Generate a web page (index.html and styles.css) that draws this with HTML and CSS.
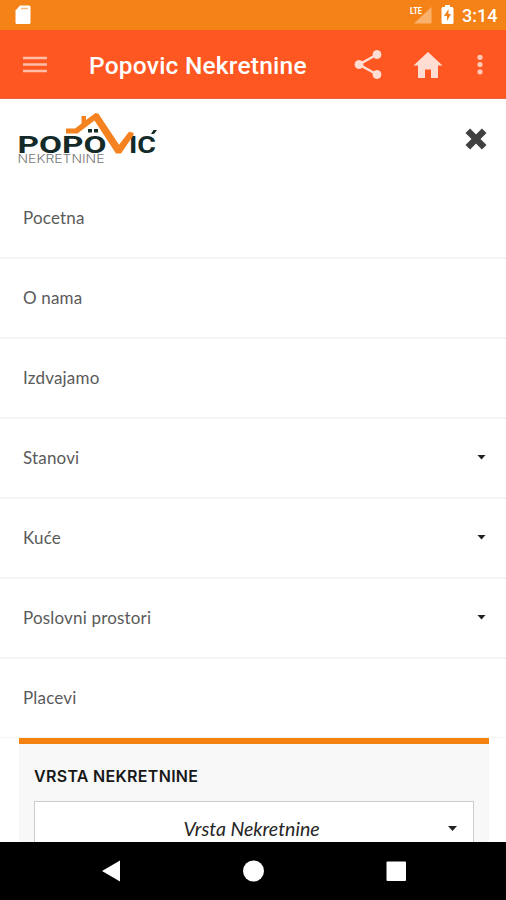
FILE: index.html
```html
<!DOCTYPE html>
<html lang="sr-Latn">
<head>
<meta charset="utf-8">
<title>Popovic Nekretnine</title>
<link rel="stylesheet" href="styles.css">
</head>
<body>
<div class="screen">
  <header class="status">
    <svg class="sd" width="16" height="20" viewBox="0 0 16 20"><path fill="#fff" d="M5 .5h9q1.500 0 1.500 1.500v15.500q0 1.500-1.500 1.500H2Q.5 19 .5 17.500V5.500Z"/><path stroke="#f9b982" stroke-width="1.500" d="M6 3.500h7"/></svg>
    <svg width="24" height="20" viewBox="0 0 24 20"><path fill="#fab16c" d="M23.500 2v16.500H6Z"/><text class="lte" x="2" y="9" textLength="12" lengthAdjust="spacingAndGlyphs">LTE</text></svg>
    <svg class="battery" width="13" height="20" viewBox="0 0 13 20"><path fill="#fff" d="M4 0h5v2h2q1.500 0 1.500 1.500v14q0 1.500-1.500 1.500H2Q.5 19 .5 17.500v-14Q.5 2 2 2h2Z"/><path fill="#f58220" d="M7.500 4 3 11h3v5l4-7H7.500Z"/></svg>
    <span class="clock">3:14</span>
  </header>
  <div class="toolbar">
    <svg class="burger" width="24" height="20" viewBox="0 0 24 20"><path stroke="#ffbea7" stroke-width="2.500" d="M0 3h24M0 9.500h24M0 16h24"/></svg>
    <h1>Popovic Nekretnine</h1>
    <svg class="share" width="28" height="32" viewBox="0 0 28 32"><g fill="#ffddd3" stroke="#ffddd3"><path fill="none" stroke-width="2.500" d="M23 5.500 5 15.500l18 10"/><circle cx="23" cy="5.500" r="4"/><circle cx="5" cy="15.500" r="4"/><circle cx="23" cy="25.500" r="4"/></g></svg>
    <svg class="home" width="30" height="28" viewBox="0 0 30 28"><path fill="#ffddd3" d="M15 1 .5 14.500H5V27h7v-8.500h6V27h7V14.500h4.500Z"/></svg>
    <svg class="more" width="6" height="20" viewBox="0 0 6 20"><g fill="#ffc9b7"><circle cx="3" cy="2.300" r="2.600"/><circle cx="3" cy="9.500" r="2.600"/><circle cx="3" cy="16.800" r="2.600"/></g></svg>
  </div>
  <main>
    <div class="brand">
      <svg width="142" height="54" viewBox="16 112 142 54">
        <text class="logo" x="17.500" y="153" textLength="89" lengthAdjust="spacingAndGlyphs">POPO</text>
        <text class="logo" x="129" y="153" textLength="27" lengthAdjust="spacingAndGlyphs">IC</text>
        <path fill="#132a28" d="M88 129h4v3.500h-4ZM94 129h4v3.500h-4ZM151 134l2.500-4h3.500l-3 4Z"/>
        <path fill="#f58220" d="M66 128.500h9l6.500-5v-7.500H86v4l9.500-7 3 .8 20.500 31 10-13 4.500 1v2.500L121 153.500h-5L94.500 120.500l-17 13H66Z"/>
        <text class="tagline" x="17.500" y="163" textLength="87" lengthAdjust="spacingAndGlyphs">NEKRETNINE</text>
      </svg>
      <svg class="close" width="22" height="22" viewBox="0 0 22 22"><path stroke="#404040" stroke-width="6.500" d="m2.800 2.800 16.400 16.400M19.200 2.800 2.800 19.200"/></svg>
    </div>
    <nav>
      <a><span>Pocetna</span></a>
      <a><span>O nama</span></a>
      <a><span>Izdvajamo</span></a>
      <a><span>Stanovi</span><i class="caret"></i></a>
      <a><span>Kuće</span><i class="caret"></i></a>
      <a><span>Poslovni prostori</span><i class="caret"></i></a>
      <a><span>Placevi</span></a>
    </nav>
    <section class="filter">
      <h2>VRSTA NEKRETNINE</h2>
      <div class="select"><span>Vrsta Nekretnine</span><i class="caret"></i></div>
    </section>
  </main>
  <footer>
    <svg width="506" height="58" viewBox="0 0 506 58"><g fill="#fff"><path d="M102 29 120 18.500v21Z"/><circle cx="253.500" cy="29" r="10.500"/><rect x="386.500" y="19.500" width="19.500" height="19.500" rx="1"/></g></svg>
  </footer>
</div>
</body>
</html>
```
FILE: styles.css
```css
* { box-sizing: border-box; }
body { margin: 0; background: #fff; }
svg { display: block; flex: none; }
.screen { width: 506px; height: 900px; display: flex; flex-direction: column; overflow: hidden; }
.status { height: 30px; flex: none; background: #f58217; display: flex; align-items: center; padding: 0 9px 0 15px; color: #fff; font-family: Roboto, sans-serif; }
.sd { margin-right: auto; }
.lte { font: 700 9px Roboto, sans-serif; fill: #fff; }
.battery { margin-left: 9px; }
.clock { margin-left: 8px; width: 35px; font-size: 18px; font-weight: 500; line-height: 30px; padding-top: 2px; white-space: nowrap; }
.toolbar { height: 69px; flex: none; background: #ff5722; border-bottom: 1px solid #e9663f; display: flex; align-items: center; padding: 1px 23px 0; }
.toolbar h1 { margin: 2px auto 0 42px; color: #fff; font: 500 24.500px/32px Roboto, sans-serif; letter-spacing: .22px; white-space: nowrap; }
.share { margin-right: 31px; }
.home { margin-right: 34px; }
main { flex: 1; min-height: 0; overflow: hidden; font-family: Lato, sans-serif; }
.brand { height: 80px; display: flex; justify-content: space-between; align-items: flex-start; padding: 13px 19px 0 16px; }
.logo { font: 700 23.300px Roboto, sans-serif; fill: #132a28; }
.tagline { font: 300 11px Inter, sans-serif; fill: #777; }
.close { margin-top: 16px; }
nav a { height: 80px; display: flex; align-items: center; justify-content: space-between; padding: 0 20px 2px 23px; border-bottom: 2px solid #f5f5f5; color: #5a5a5a; font-size: 17px; letter-spacing: .18px; }
nav a:last-child { height: 79px; border-bottom-width: 1px; }
.caret { width: 9px; height: 5px; background: #222; clip-path: polygon(0 0, 100% 0, 50% 100%); }
.filter { margin: 0 17px 0 19px; height: 130px; border-top: 6px solid #f58210; background: #f8f8f8; padding: 21px 15px 0; }
.filter h2 { margin: 0; font: 600 16px/22px Inter, sans-serif; letter-spacing: .3px; color: #181818; white-space: nowrap; }
.select { margin-top: 14px; height: 55px; border: 1px solid #ccc; background: #fff; display: flex; align-items: center; padding: 0 16px 0 20px; font-size: 19.500px; font-style: italic; color: #252525; }
.select span { flex: 1; text-align: center; }
footer { height: 58px; flex: none; background: #000; }
```
